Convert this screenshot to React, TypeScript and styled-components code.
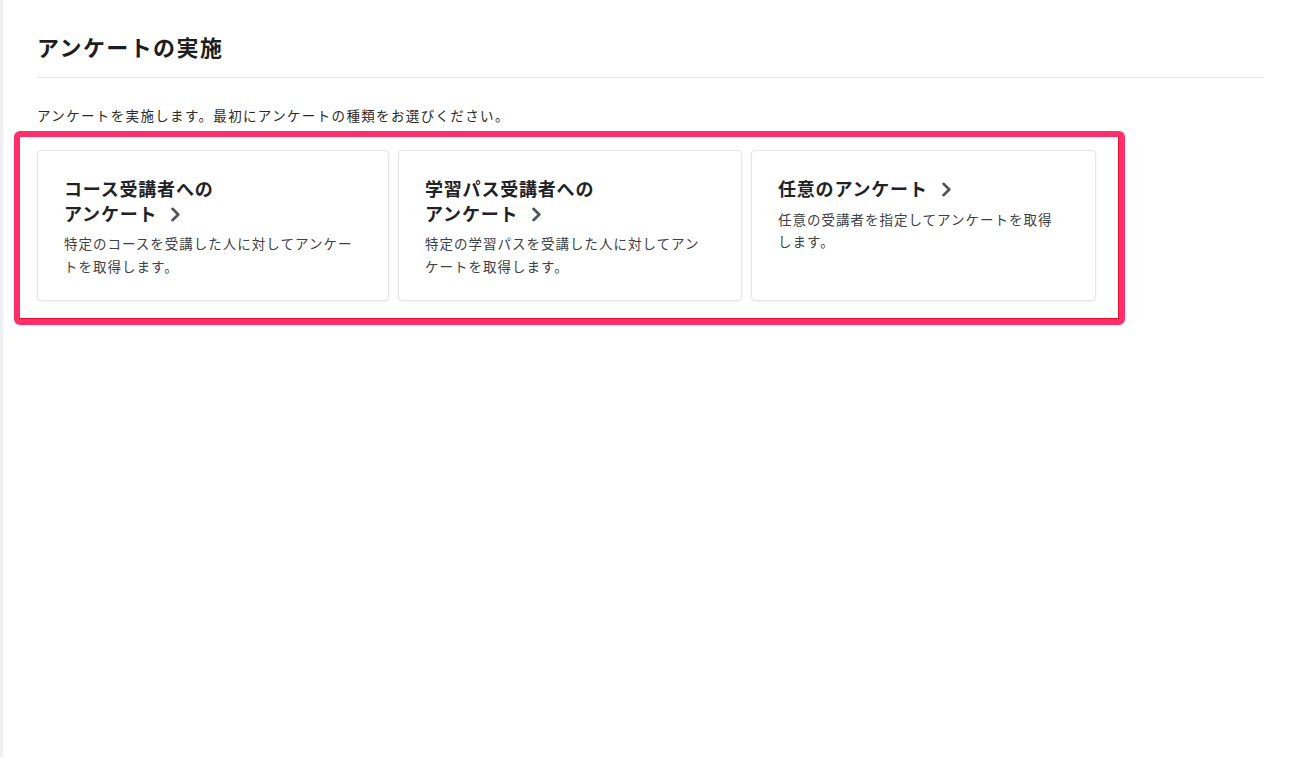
import React from 'react';
import styled, { createGlobalStyle } from 'styled-components';

const GlobalStyle = createGlobalStyle`
  html, body {
    margin: 0;
    padding: 0;
    background: #ffffff;
  }
  body {
    font-family: "Noto Sans CJK JP", "Noto Sans", sans-serif;
    color: #222222;
  }
`;

type SurveyType = {
  id: string;
  title: string[];
  description: string;
};

const surveys: SurveyType[] = [
  {
    id: 'course',
    title: ['コース受講者への', 'アンケート'],
    description: '特定のコースを受講した人に対してアンケートを取得します。',
  },
  {
    id: 'path',
    title: ['学習パス受講者への', 'アンケート'],
    description: '特定の学習パスを受講した人に対してアンケートを取得します。',
  },
  {
    id: 'any',
    title: ['任意のアンケート'],
    description: '任意の受講者を指定してアンケートを取得します。',
  },
];

const Chevron = () => (
  <ChevronIcon width="11" height="15" viewBox="0 0 11 15" fill="none">
    <path d="M2.5 1.8 L8.3 7.5 L2.5 13.2" stroke="#505357" strokeWidth="2.6" strokeLinecap="round" strokeLinejoin="round" />
  </ChevronIcon>
);

const App = () => {
  return (
    <Page>
      <GlobalStyle />
      <SideEdge />
      <Main>
        <Title>アンケートの実施</Title>
        <Lead>アンケートを実施します。最初にアンケートの種類をお選びください。</Lead>
        <Highlight>
          <CardGrid>
            {surveys.map(survey => (
              <Card key={survey.id}>
                <CardTitle>
                  {survey.title.map((line, i) => (
                    <React.Fragment key={line}>
                      {line}
                      {i < survey.title.length - 1 ? <br /> : <Chevron />}
                    </React.Fragment>
                  ))}
                </CardTitle>
                <CardText>{survey.description}</CardText>
              </Card>
            ))}
          </CardGrid>
        </Highlight>
      </Main>
    </Page>
  );
};

export default App;

const Page = styled('div')`
  display: flex;
  min-height: 757px;
  width: 1298px;
`;

const SideEdge = styled('div')`
  width: 3px;
  flex: none;
  background: #eff0f3;
`;

const Main = styled('main')`
  flex: 1;
  padding: 31px 34px 0 34px;
`;

const Title = styled('h1')`
  margin: 0;
  padding-bottom: 16px;
  border-bottom: 1px solid #e6e6e6;
  font-size: 22px;
  line-height: 30px;
  font-weight: 700;
  color: #1e1e1e;
  letter-spacing: 1.4px;
`;

const Lead = styled('p')`
  margin: 27px 0 6px;
  font-size: 13.5px;
  line-height: 20px;
  letter-spacing: 1.35px;
  color: #2a2a2a;
`;

const Highlight = styled('div')`
  width: 1111px;
  box-sizing: border-box;
  margin-left: -23px;
  padding: 13px 24px 18px 17px;
  border: 6px solid #ff2d6a;
  border-radius: 6px;
  box-shadow: inset -1px -1px 0 #e8102c;
`;

const CardGrid = styled('div')`
  display: grid;
  grid-template-columns: 352px 344px 345px;
  column-gap: 9px;
`;

const Card = styled('div')`
  box-sizing: border-box;
  min-height: 151px;
  padding: 25px 32px 20px 26px;
  background: #ffffff;
  border: 1px solid #e3e5e8;
  border-radius: 4px;
  box-shadow: 0 1px 3px rgba(0, 0, 0, 0.06);
`;

const CardTitle = styled('div')`
  font-size: 18px;
  line-height: 24.5px;
  font-weight: 700;
  color: #1f2328;
  letter-spacing: 0.8px;
`;

const ChevronIcon = styled('svg')`
  margin-left: 13px;
  vertical-align: -1px;
`;

const CardText = styled('p')`
  margin: 7px 0 0;
  font-size: 13.5px;
  line-height: 22.5px;
  letter-spacing: 1px;
  color: #3d4045;
`;
